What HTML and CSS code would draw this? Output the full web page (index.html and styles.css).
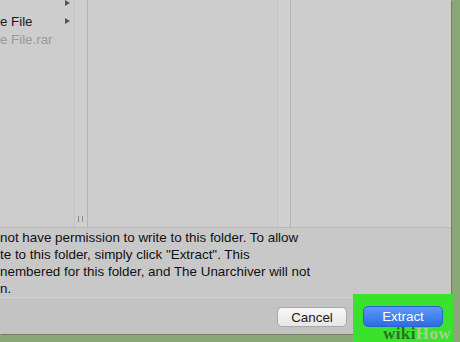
FILE: index.html
```html
<!DOCTYPE html>
<html>
<head>
<meta charset="utf-8">
<link rel="stylesheet" href="styles.css">
</head>
<body>
<div class="stage">
  <div class="dialog">
    <div class="browser">
      <div class="col col1">
        <div class="list">
          <div class="row"><span class="name"></span><span class="arrow"></span></div>
          <div class="row"><span class="name">e File</span><span class="arrow"></span></div>
          <div class="row dim"><span class="name">e File.rar</span></div>
        </div>
      </div>
      <div class="gutter"><span class="handle"></span></div>
      <div class="col col2"></div>
      <div class="gutter"></div>
      <div class="col col3"></div>
    </div>
    <div class="message">
      <div class="line">not have permission to write to this folder. To allow</div>
      <div class="line">te to this folder, simply click "Extract". This</div>
      <div class="line">nembered for this folder, and The Unarchiver will not</div>
      <div class="line">n.</div>
    </div>
    <div class="buttons">
      <button class="btn cancel">Cancel</button>
      <button class="btn extract">Extract</button>
    </div>
  </div>
  <div class="highlight"></div>
  <div class="watermark"><span class="wiki">wiki</span><span class="how">How</span></div>
</div>
</body>
</html>
```
FILE: styles.css
```css
html, body {
  margin: 0;
  padding: 0;
}
body {
  width: 460px;
  height: 342px;
  overflow: hidden;
  background: #8aa778;
  font-family: "Liberation Sans", Arial, sans-serif;
}
.stage {
  position: relative;
  width: 460px;
  height: 342px;
}
.dialog {
  width: 451px;
  height: 334px;
  display: flex;
  flex-direction: column;
  background: #c6c6c6;
  box-shadow: 1px 1px 0 #6f7f62;
}
.browser {
  height: 228px;
  flex: none;
  display: flex;
  background: #cdcdcd;
  border-bottom: 1px solid #b9b9b9;
  box-sizing: border-box;
  overflow: hidden;
}
.col {
  height: 100%;
  overflow: hidden;
}
.col1 { width: 74px; flex: none; }
.col2 { width: 189px; flex: none; }
.col3 { flex: 1; }
.gutter {
  width: 14px;
  flex: none;
  background: #cfcfcf;
  border-left: 1px solid #c2c2c2;
  border-right: 1px solid #b3b3b3;
  box-sizing: border-box;
  display: flex;
  align-items: flex-end;
  justify-content: center;
  padding-bottom: 4px;
}
.handle {
  width: 3px;
  height: 6px;
  border-left: 1px solid #8c8c8c;
  border-right: 1px solid #8c8c8c;
  margin-bottom: 1px;
  margin-left: -2px;
}
.list {
  margin-top: -6px;
}
.row {
  height: 18px;
  display: flex;
  align-items: center;
  justify-content: space-between;
  padding-right: 4px;
  font-size: 13.3px;
  color: #1a1a1a;
}
.row.dim { color: #9a9a9a; }
.arrow {
  width: 0;
  height: 0;
  border-top: 3.5px solid transparent;
  border-bottom: 3.5px solid transparent;
  border-left: 5px solid #555;
}
.message {
  height: 69px;
  flex: none;
  box-sizing: border-box;
  padding-top: 1px;
  background: #c8c8c8;
  font-size: 13.4px;
  line-height: 17px;
  color: #111;
  overflow: hidden;
}
.line {
  white-space: nowrap;
}
.buttons {
  flex: 1;
  display: flex;
  justify-content: flex-end;
  align-items: flex-start;
  gap: 16px;
  padding: 8px 8px 0 0;
  background: #c3c3c3;
  border-top: 1px solid #d2d2d2;
}
.btn {
  font-family: "Liberation Sans", Arial, sans-serif;
  font-size: 13.4px;
  height: 21px;
  padding: 0;
  border-radius: 5px;
  box-sizing: border-box;
}
.cancel {
  width: 70px;
  margin-top: 1px;
  height: 20px;
  color: #1a1a1a;
  background: linear-gradient(#f7f7f7, #e6e6e6);
  border: 1px solid #a9a9a9;
}
.extract {
  position: relative;
  z-index: 2;
  width: 80px;
  color: #fff;
  background: linear-gradient(#5b9bf7, #2a6de6);
  border: 1px solid #2a63c9;
}
.highlight {
  position: absolute;
  z-index: 1;
  left: 353px;
  top: 294px;
  width: 100px;
  height: 48px;
  background: #3be22c;
}
.watermark {
  position: absolute;
  z-index: 3;
  left: 383px;
  top: 325px;
  font-family: "Liberation Serif", "Times New Roman", serif;
  font-weight: bold;
  font-size: 17px;
  line-height: 17px;
  letter-spacing: 0.4px;
}
.wiki { color: #2f6e2a; }
.how { color: #a9cf8e; }
```
